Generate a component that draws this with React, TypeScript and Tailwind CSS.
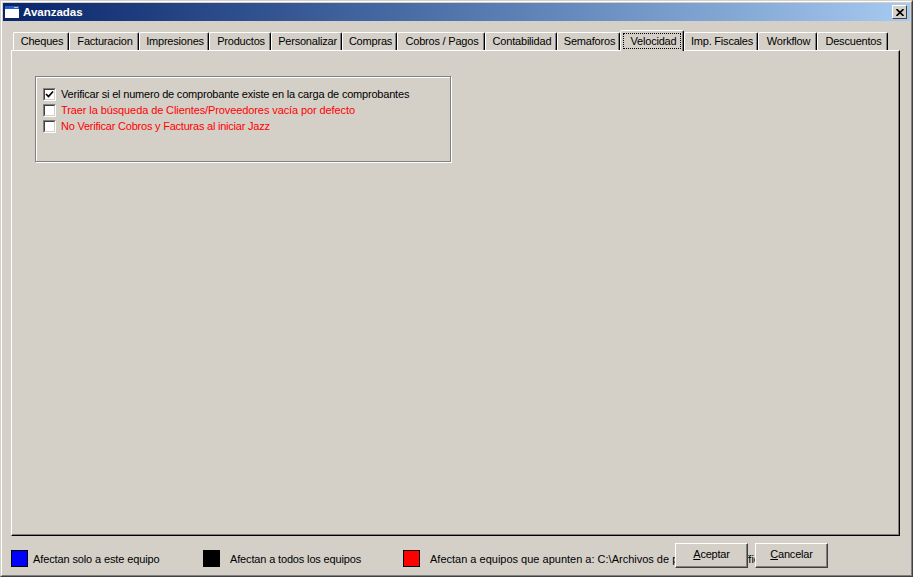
import React from 'react';

// Classic Windows 2000 style dialog: "Avanzadas"
const TABS = [
    { label: 'Cheques', width: 'w-[56px]' },
    { label: 'Facturacion', width: 'w-[70px]' },
    { label: 'Impresiones', width: 'w-[70px]' },
    { label: 'Productos', width: 'w-[62px]' },
    { label: 'Personalizar', width: 'w-[71px]' },
    { label: 'Compras', width: 'w-[55px]' },
    { label: 'Cobros / Pagos', width: 'w-[88px]' },
    { label: 'Contabilidad', width: 'w-[72px]' },
    { label: 'Semaforos', width: 'w-[63px]' },
    { label: 'Velocidad', width: 'w-[64px]', active: true },
    { label: 'Imp. Fiscales', width: 'w-[74px]' },
    { label: 'Workflow', width: 'w-[59px]' },
    { label: 'Descuentos', width: 'w-[71px]' },
];

const OPTIONS = [
    { label: 'Verificar si el numero de comprobante existe en la carga de comprobantes', checked: true, tone: 'text-black tracking-[-0.2px]' },
    { label: 'Traer la búsqueda de Clientes/Proveedores vacía por defecto', checked: false, tone: 'text-[#ff0000] tracking-[-0.1px]' },
    { label: 'No Verificar Cobros y Facturas al iniciar Jazz', checked: false, tone: 'text-[#ff0000] tracking-[-0.22px]' },
];

function Tab({ label, width, active }: { label: string; width: string; active?: boolean }) {
    if (active) {
        return (
            <div className={`${width} relative z-10 -mt-[2px] -mb-[1px] h-[21px] shrink-0 rounded-t-[2px] border-t border-l border-white border-r border-r-black bg-[#d4d0c8] p-[2px] shadow-[inset_-1px_0_0_#808080]`}>
                <div className="flex h-[16px] items-center justify-center border border-dotted border-black pl-[3px]">{label}</div>
            </div>
        );
    }
    return (
        <div className={`${width} flex h-[18px] shrink-0 items-center justify-center rounded-t-[2px] border-t border-l border-white border-r border-r-black bg-[#d4d0c8] pl-[2px] shadow-[inset_-1px_0_0_#808080]`}>
            {label}
        </div>
    );
}

function CheckBox({ checked }: { checked: boolean }) {
    return (
        <div className="h-[13px] w-[13px] shrink-0 border border-t-[#808080] border-l-[#808080] border-r-white border-b-white">
            <div className="h-[11px] w-[11px] border border-t-[#404040] border-l-[#404040] border-r-[#d4d0c8] border-b-[#d4d0c8] bg-white">
                {checked && (
                    <svg width="9" height="9" viewBox="0 0 9 9" className="block">
                        <path d="M1 4 L3.5 6.5 L8 1.5" fill="none" stroke="#000" strokeWidth="1.7" />
                    </svg>
                )}
            </div>
        </div>
    );
}

function DialogButton({ first, rest, className }: { first: string; rest: string; className: string }) {
    return (
        <div className={`${className} absolute top-[542px] flex h-[25px] w-[73px] items-center justify-center border border-t-white border-l-white border-r-[#404040] border-b-[#404040] bg-[#d4d0c8] pb-[2px] shadow-[inset_-1px_-1px_0_#808080]`}>
            <span className="underline underline-offset-1">{first}</span>
            {rest}
        </div>
    );
}

export default function App() {
    return (
        <div className="relative h-[577px] w-[913px] overflow-hidden border border-t-[#d4d0c8] border-l-[#d4d0c8] border-r-[#404040] border-b-[#404040] bg-[#d4d0c8] font-['Liberation_Sans',sans-serif] text-[11px] tracking-[-0.2px] text-black">
            <div className="h-full border border-t-white border-l-white border-r-[#808080] border-b-[#808080] p-px">
                {/* title bar */}
                <div className="flex h-[18px] items-center justify-between bg-gradient-to-r from-[#0a246a] to-[#a6caf0] pl-[2px] pr-[3px]">
                    <div className="flex items-center gap-[4px]">
                        <svg width="14" height="12" viewBox="0 0 14 12" className="block">
                            <rect width="14" height="12" fill="#fff" />
                            <rect width="14" height="3" fill="#1f5fd0" />
                            <rect x="9" y="1" width="4" height="1" fill="#e0c080" />
                        </svg>
                        <span className="pt-[2px] text-[11.5px] font-bold tracking-normal text-white">Avanzadas</span>
                    </div>
                    <div className="flex h-[14px] w-[15px] items-center justify-center border border-t-white border-l-white border-r-[#404040] border-b-[#404040] bg-[#d4d0c8]">
                        <svg width="8" height="7" viewBox="0 0 8 7" className="block">
                            <path d="M0.5 0 L7.5 7 M7.5 0 L0.5 7" stroke="#000" strokeWidth="1.6" fill="none" />
                        </svg>
                    </div>
                </div>

                {/* tab strip */}
                <div className="ml-[10px] mt-[11px] flex h-[18px] items-end">
                    {TABS.map((tab) => (
                        <Tab key={tab.label} label={tab.label} width={tab.width} active={tab.active} />
                    ))}
                </div>

                {/* tab page */}
                <div className="ml-[8px] h-[486px] w-[889px] border border-t-white border-l-white border-r-black border-b-black pl-[23px] pt-[25px] shadow-[inset_-1px_-1px_0_#808080]">
                    <div className="h-[86px] w-[416px] border border-[#808080] shadow-[1px_1px_0_#fff,inset_1px_1px_0_#fff]">
                        <div className="flex flex-col gap-[3px] pl-[7px] pt-[11px]">
                            {OPTIONS.map((option) => (
                                <div key={option.label} className={`flex h-[13px] items-center gap-[5px] ${option.tone}`}>
                                    <CheckBox checked={option.checked} />
                                    <span className="whitespace-nowrap">{option.label}</span>
                                </div>
                            ))}
                        </div>
                    </div>
                </div>

                {/* colour legend */}
                <div className="ml-[8px] mt-[14px] flex h-[17px] items-center whitespace-nowrap">
                    <div className="h-[17px] w-[17px] border border-black bg-[#0000ff]" />
                    <span className="ml-[5px] w-[170px] pt-px tracking-[-0.12px]">Afectan solo a este equipo</span>
                    <div className="h-[17px] w-[17px] bg-black" />
                    <span className="ml-[10px] w-[173px] pt-px tracking-[-0.15px]">Afectan a todos los equipos</span>
                    <div className="h-[17px] w-[17px] border border-black bg-[#ff0000]" />
                    <span className="ml-[10px] pt-px tracking-normal">Afectan a equipos que apunten a: C:\Archivos de programa\Mi Office</span>
                </div>
            </div>

            <DialogButton className="left-[674px]" first="A" rest="ceptar" />
            <DialogButton className="left-[754px]" first="C" rest="ancelar" />
        </div>
    );
}
